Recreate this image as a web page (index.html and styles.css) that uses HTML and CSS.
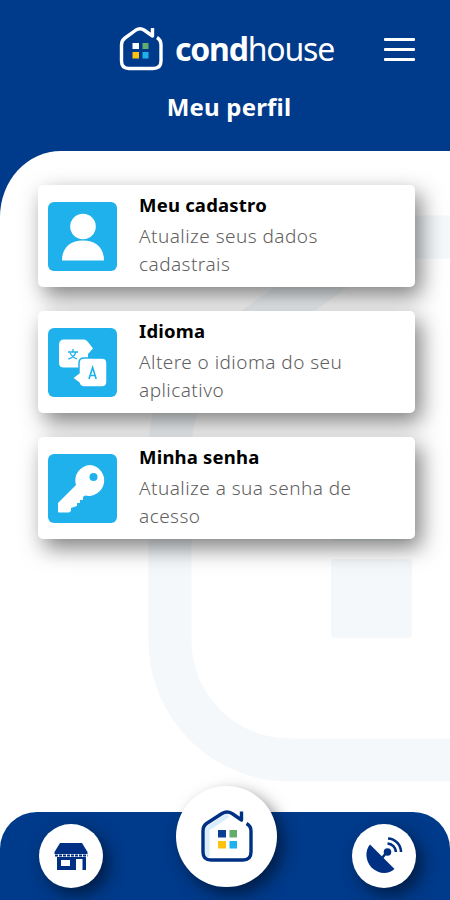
FILE: index.html
```html
<!DOCTYPE html>
<html lang="pt-BR">
  <head>
    <meta charset="UTF-8" />
    <meta name="viewport" content="width=device-width, initial-scale=1.0" />
    <title>Condhouse - Meu perfil</title>
    <link rel="stylesheet" href="styles.css">
  </head>
  <body>
    <header class="header">
      <div class="header-top">
        <div class="logo">
          <svg class="logo-icon" viewBox="0 0 44 46" fill="none">
            <path d="M38 11.500Q42 14 42 19V35Q42 42.500 34 42.500H10Q2.500 42.500 2.500 35V19Q2.500 14.500 6 12L17 4Q21 1.500 25 4L33.500 10V2" stroke="#fff" stroke-width="3.400" stroke-linejoin="round" />
            <path d="M13.500 17h6.500v6h-6.500z" fill="#fff" />
            <path d="M23.500 17h6v6h-6z" fill="#62ad6b" />
            <path d="M13.500 26h6.500v6.500h-6.500z" fill="#ffc20e" />
            <path d="M23.500 26h6v6.500h-6z" fill="#1eb1eb" />
          </svg>
          <span class="logo-text"><b>cond</b>house</span>
        </div>
        <button class="menu-btn" aria-label="Menu">
          <span></span>
          <span></span>
          <span></span>
        </button>
      </div>
      <h1>Meu perfil</h1>
    </header>

    <main class="content">
      <!-- Marca d'água -->
      <svg class="watermark" viewBox="0 0 450 662" fill="none">
        <path d="M460 86H420Q380 86 342 114L215 205Q170 238 170 300V490A120 119 0 0 0 290 609H460" stroke="#f4f8fb" stroke-width="43" />
        <rect x="331" y="310" width="81" height="80" rx="4" fill="#f4f8fb" />
        <rect x="331" y="408" width="81" height="79" rx="4" fill="#f4f8fb" />
      </svg>

      <a class="card">
        <svg class="card-icon" viewBox="0 0 69 69">
          <circle cx="35" cy="24.500" r="12.800" fill="#fff" />
          <path d="M14 58.500C14 46 22 38.500 35 38.500S56 46 56 58.500Z" fill="#fff" />
        </svg>
        <div class="card-text">
          <h2>Meu cadastro</h2>
          <p>Atualize seus dados<br>cadastrais</p>
        </div>
      </a>

      <a class="card">
        <svg class="card-icon" viewBox="0 0 69 69">
          <path d="M16 11.500H36Q38.500 11.500 40 14L45 20.500L40 26V35Q40 39.500 35 39.500H16Q11 39.500 11 35V17Q11 11.500 16 11.500Z" fill="#fff" />
          <path d="M20 24H30M25 21V24M28 24Q26 29.500 20.500 31M22 25Q24.500 29.500 29 31" stroke="#1eb1eb" stroke-width="1.300" fill="none" />
          <path d="M36 30H54Q59 30 59 35V54Q59 59 54 59H36Q32 59 31 55L24.500 50L31 45V35Q31 30 36 30Z" fill="#fff" stroke="#1eb1eb" stroke-width="1.500" />
          <path d="M41 51L44.600 39.500L48.200 51M42.200 47.500H47" stroke="#1eb1eb" stroke-width="1.600" fill="none" />
        </svg>
        <div class="card-text">
          <h2>Idioma</h2>
          <p>Altere o idioma do seu<br>aplicativo</p>
        </div>
      </a>

      <a class="card">
        <svg class="card-icon" viewBox="0 0 69 69">
          <path d="M42 11A15.500 15.500 0 1 1 37 41.500L35 43V46H32V49H29V52L23 54V57L21 58.500H11Q10 58.500 10 57V49L28 31A15.500 15.500 0 0 1 42 11Z" fill="#fff" />
          <circle cx="45.500" cy="23" r="4" fill="#1eb1eb" />
        </svg>
        <div class="card-text">
          <h2>Minha senha</h2>
          <p>Atualize a sua senha de<br>acesso</p>
        </div>
      </a>
    </main>

    <nav class="navbar">
      <a class="nav-btn">
        <svg viewBox="0 0 64 64">
          <path d="M21 19H43L48.500 28V30H15.500V28Z" fill="#003083" />
          <path d="M16 31.500H48.500" stroke="#003083" stroke-width="2" stroke-dasharray="3 1" />
          <path d="M18 33H47V46H43.500V35H37V46H18ZM22 36V42H31V36Z" fill="#003083" fill-rule="evenodd" />
        </svg>
      </a>
      <a class="nav-btn nav-home">
        <svg viewBox="0 0 101 101" fill="none">
          <path d="M31 71V43L52 29" stroke="#d8eefb" stroke-width="5" />
          <path d="M70.500 37.500Q75 40 75 45V66Q75 74 67 74H35Q27 74 27 66V45Q27 40 30.500 37.500L46 27.500Q51 24.500 56 27.500L65.500 34V25.500" stroke="#003083" stroke-width="3.400" stroke-linejoin="round" />
          <path d="M42 44h8v7.500h-8z" fill="#0b3f94" />
          <path d="M53.500 44h7.500v7.500h-7.500z" fill="#62ad6b" />
          <path d="M42 55h8v7.500h-8z" fill="#ffc20e" />
          <path d="M53.500 55h7.500v7.500h-7.500z" fill="#1eb1eb" />
        </svg>
      </a>
      <a class="nav-btn">
        <svg viewBox="0 0 64 64" fill="none">
          <path d="M18 20.500L42.500 45C36 51 26 50 19.500 43.500C13.500 37 12.500 27 18 20.500Z" fill="#003083" />
          <path d="M30 34L35 28" stroke="#003083" stroke-width="2.500" />
          <circle cx="35.500" cy="28" r="3.800" fill="#003083" />
          <path d="M35.500 19.500A9 9 0 0 1 44 28M36 14.500A13.500 13.500 0 0 1 49 28" stroke="#003083" stroke-width="2.600" />
        </svg>
      </a>
    </nav>
  </body>
</html>
```
FILE: styles.css
```css
:root {
  --primary-color: #003a8a;
  --accent-color: #1eb1eb;
  --text-light: #606060;
  --sombra: 6px 9px 22px rgba(0, 0, 0, 0.5);
}

* {
  box-sizing: border-box;
}

body {
  margin: 0;
  height: 900px;
  display: flex;
  flex-direction: column;
  overflow: hidden;
  background-color: var(--primary-color);
  font-family: "Noto Sans", "Open Sans", sans-serif;
}

.header {
  height: 151px;
  padding-top: 26px;
  color: #fff;
}

.header-top {
  display: flex;
  align-items: center;
  justify-content: space-between;
  height: 46px;
  padding: 0 35px 0 119px;
}

.logo {
  display: flex;
  align-items: center;
  gap: 12px;
}

.logo-icon {
  width: 44px;
  height: 46px;
}

.logo-text {
  font-size: 32px;
  line-height: 48px;
  letter-spacing: -1.2px;
}

.menu-btn {
  display: flex;
  flex-direction: column;
  gap: 7px;
  padding: 0;
  border: none;
  background: none;
}

.menu-btn span {
  width: 31px;
  height: 3px;
  border-radius: 1px;
  background-color: #fff;
}

h1 {
  margin: 18px 0 0;
  padding-left: 8px;
  font-size: 24px;
  line-height: 34px;
  letter-spacing: 0.2px;
  text-align: center;
}

.content {
  position: relative;
  height: 749px;
  padding: 34px 35px 0 38px;
  border-radius: 61px 0 0 0 / 66px 0 0 0;
  background-color: #fff;
  display: flex;
  flex-direction: column;
  gap: 24px;
}

.watermark {
  position: absolute;
  left: 0;
  top: 0;
  width: 450px;
  height: 662px;
}

.card {
  position: relative;
  display: flex;
  align-items: center;
  gap: 22px;
  height: 102px;
  padding-left: 10px;
  border-radius: 5px;
  background-color: #fff;
  box-shadow: var(--sombra);
}

.card-icon {
  width: 69px;
  height: 69px;
  border-radius: 6px;
  background-color: var(--accent-color);
}

.card-text {
  padding-bottom: 4px;
}

.card h2 {
  margin: 0 0 2px;
  color: #000;
  font-size: 18.5px;
  line-height: 30px;
  letter-spacing: 0.2px;
}

.card p {
  margin: 0;
  color: var(--text-light);
  font-size: 19px;
  font-weight: 300;
  line-height: 28px;
  letter-spacing: 0.45px;
  white-space: nowrap;
}

.navbar {
  position: relative;
  flex: none;
  display: flex;
  justify-content: space-between;
  height: 88px;
  margin-top: -88px;
  padding: 12px 34px 0 39px;
  border-radius: 37px 37px 0 0;
  background-color: var(--primary-color);
}

.nav-btn {
  width: 64px;
  height: 64px;
  border-radius: 50%;
  background-color: #fff;
  box-shadow: 6px 7px 16px rgba(0, 0, 0, 0.5);
}

.nav-btn svg {
  display: block;
}

.nav-home {
  width: 101px;
  height: 101px;
  margin: -38px 3px 0 0;
}
```
